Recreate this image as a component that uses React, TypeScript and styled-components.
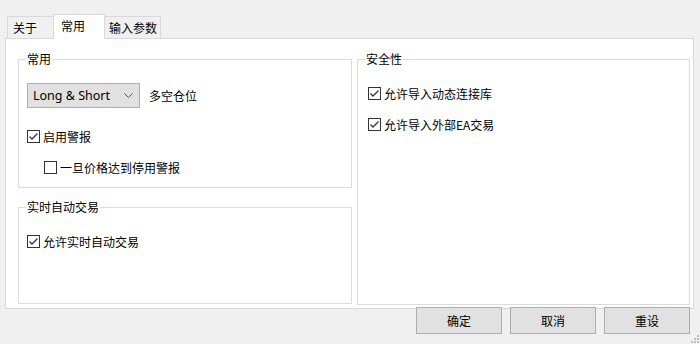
import styled, { createGlobalStyle } from "styled-components";

const TABS = [
  { label: "关于", width: 47, pad: 5 },
  { label: "常用", width: 52, pad: 7, active: true },
  { label: "输入参数", width: 57, pad: 4 },
];

const GlobalStyle = createGlobalStyle`
  html, body {
    margin: 0;
    padding: 0;
    background: #f0f0f0;
  }
  body {
    font-family: "Noto Sans", "Noto Sans CJK SC", sans-serif;
    font-size: 12px;
    color: #000;
  }
`;

const CheckBox = ({ checked }: { checked?: boolean }) => (
  <svg width="13" height="13" viewBox="0 0 13 13">
    <rect x="0.5" y="0.5" width="12" height="12" fill="#fff" stroke="#333" />
    {checked && (
      <polyline points="2.5,6.5 5,9 10.5,3.5" fill="none" stroke="#333" strokeWidth="1.3" />
    )}
  </svg>
);

const Check = ({ label, checked }: { label: string; checked?: boolean }) => (
  <CheckRow>
    <CheckBox checked={checked} />
    <span>{label}</span>
  </CheckRow>
);

const App = () => {
  return (
    <Window>
      <GlobalStyle />
      <TabBar>
        {TABS.map((t) => (
          <Tab key={t.label} $active={!!t.active} $width={t.width} $pad={t.pad}>
            {t.label}
          </Tab>
        ))}
      </TabBar>
      <Panel>
        <LeftColumn>
          <Group $height={129}>
            <Legend>常用</Legend>
            <GroupBody $left={8} $top={17}>
              <SelectRow>
                <Select>
                  <span>Long &amp; Short</span>
                  <svg width="9" height="6" viewBox="0 0 9 6">
                    <polyline points="0.5,0.5 4.5,4.5 8.5,0.5" fill="none" stroke="#555" strokeWidth="1" />
                  </svg>
                </Select>
                <span>多空仓位</span>
              </SelectRow>
              <Spacer $h={20} />
              <Check label="启用警报" checked />
              <Spacer $h={15} />
              <Indent>
                <Check label="一旦价格达到停用警报" />
              </Indent>
            </GroupBody>
          </Group>
          <Group $height={97}>
            <Legend>实时自动交易</Legend>
            <GroupBody $left={8} $top={19}>
              <Check label="允许实时自动交易" checked />
            </GroupBody>
          </Group>
        </LeftColumn>
        <Group $height={246} $width={333}>
          <Legend>安全性</Legend>
          <GroupBody $left={10} $top={19}>
            <Check label="允许导入动态连接库" checked />
            <Spacer $h={15} />
            <Check label="允许导入外部EA交易" checked />
          </GroupBody>
        </Group>
      </Panel>
      <ButtonRow>
        <Button>确定</Button>
        <Button>取消</Button>
        <Button>重设</Button>
      </ButtonRow>
      <Grip width="8" height="8" viewBox="0 0 8 8">
        <rect x="6" y="0" width="2" height="2" fill="#bdbdbd" />
        <rect x="3" y="3" width="2" height="2" fill="#bdbdbd" />
        <rect x="6" y="3" width="2" height="2" fill="#bdbdbd" />
        <rect x="0" y="6" width="2" height="2" fill="#bdbdbd" />
        <rect x="3" y="6" width="2" height="2" fill="#bdbdbd" />
        <rect x="6" y="6" width="2" height="2" fill="#bdbdbd" />
      </Grip>
    </Window>
  );
};
export default App;

const Window = styled.div`
  position: relative;
  width: 700px;
  height: 344px;
  box-sizing: border-box;
  padding: 14px 0 0 5px;
  background: #f0f0f0;
  overflow: hidden;
`;

const TabBar = styled.div`
  display: flex;
  align-items: flex-end;
  height: 24px;
  padding-left: 2px;
  position: relative;
  z-index: 2;
`;

const Tab = styled.div<{ $active: boolean; $width: number; $pad: number }>`
  box-sizing: border-box;
  width: ${(p) => p.$width}px;
  height: ${(p) => (p.$active ? 25 : 22)}px;
  margin-bottom: ${(p) => (p.$active ? -1 : 0)}px;
  margin-left: -1px;
  padding-left: ${(p) => p.$pad}px;
  padding-bottom: ${(p) => (p.$active ? 3 : 0)}px;
  display: flex;
  align-items: center;
  border: 1px solid #d9d9d9;
  border-bottom: none;
  background: ${(p) => (p.$active ? "#fff" : "#f0f0f0")};
  position: relative;
  z-index: ${(p) => (p.$active ? 2 : 1)};
  font-family: "Noto Sans CJK SC", sans-serif;
  &:first-child {
    margin-left: 0;
  }
`;

const Panel = styled.div`
  box-sizing: border-box;
  width: 689px;
  height: 271px;
  border: 1px solid #d9d9d9;
  background: #fff;
  padding: 20px 2px 0 12px;
  display: flex;
  gap: 5px;
  position: relative;
  z-index: 1;
`;

const LeftColumn = styled.div`
  display: flex;
  flex-direction: column;
  gap: 19px;
`;

const Group = styled.div<{ $height: number; $width?: number }>`
  box-sizing: border-box;
  width: ${(p) => p.$width ?? 334}px;
  height: ${(p) => p.$height}px;
  border: 1px solid #dcdcdc;
  display: flex;
  flex-direction: column;
`;

const Legend = styled.div`
  align-self: flex-start;
  margin: -8px 0 0 7px;
  padding: 0 1px;
  background: #fff;
  line-height: 14px;
  font-family: "Noto Sans CJK SC", sans-serif;
`;

const GroupBody = styled.div<{ $left: number; $top: number }>`
  display: flex;
  flex-direction: column;
  align-items: flex-start;
  padding-left: ${(p) => p.$left}px;
  padding-top: ${(p) => p.$top}px;
`;

const Spacer = styled.div<{ $h: number }>`
  height: ${(p) => p.$h}px;
  flex: none;
`;

const SelectRow = styled.div`
  display: flex;
  align-items: center;
  gap: 9px;
  font-family: "Noto Sans CJK SC", sans-serif;
`;

const Select = styled.div`
  box-sizing: border-box;
  width: 113px;
  height: 25px;
  padding: 0 6px 0 5px;
  display: flex;
  align-items: center;
  justify-content: space-between;
  background: #e1e1e1;
  border: 1px solid #adadad;
  font-family: "Noto Sans", sans-serif;
  font-size: 12.5px;
`;

const CheckRow = styled.div`
  display: flex;
  align-items: center;
  gap: 3px;
  height: 16px;
  font-family: "Noto Sans CJK SC", sans-serif;
  svg {
    flex: none;
  }
`;

const Indent = styled.div`
  padding-left: 17px;
`;

const ButtonRow = styled.div`
  display: flex;
  justify-content: flex-end;
  gap: 8px;
  margin-top: -2px;
  padding-right: 10px;
  position: relative;
  z-index: 3;
`;

const Button = styled.button`
  box-sizing: border-box;
  width: 86px;
  height: 27px;
  margin: 0;
  padding: 0;
  background: #e1e1e1;
  border: 1px solid #adadad;
  font-family: "Noto Sans CJK SC", sans-serif;
  font-size: 12px;
  color: #000;
`;

const Grip = styled.svg`
  position: absolute;
  right: 1px;
  bottom: 1px;
`;
